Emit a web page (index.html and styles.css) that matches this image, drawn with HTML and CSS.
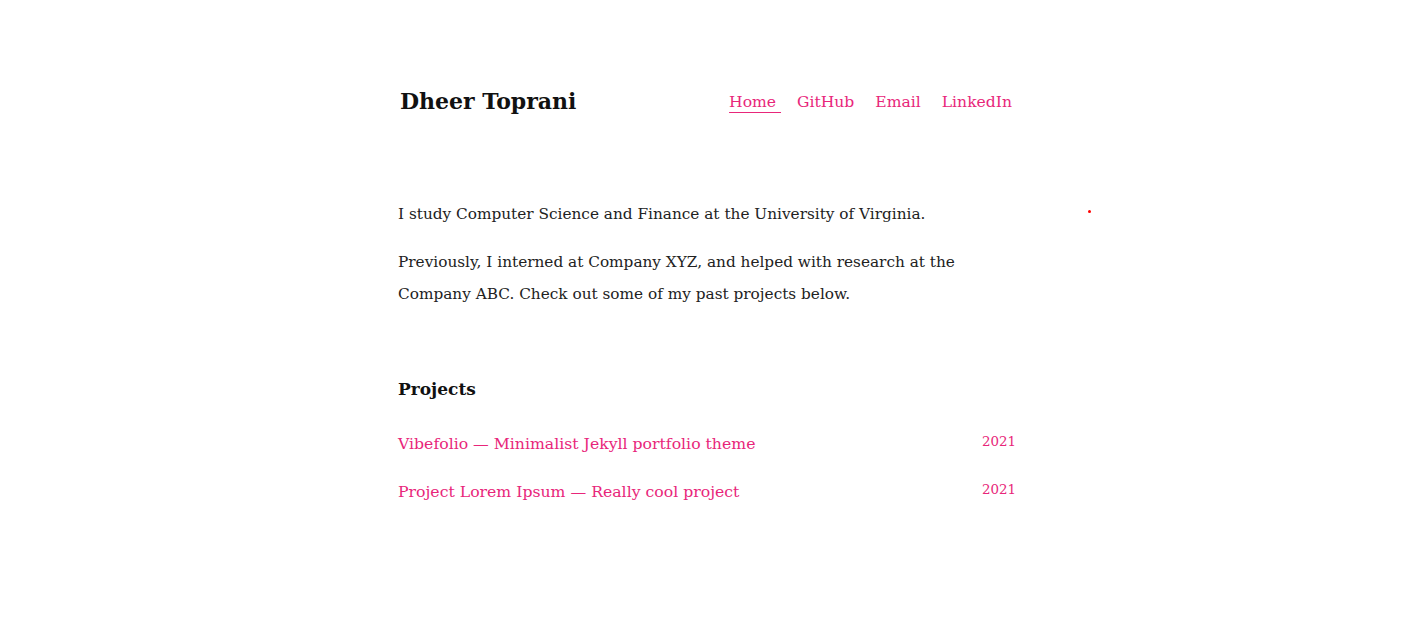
FILE: index.html
```html
<!DOCTYPE html>
<html lang="en">
<head>
<meta charset="utf-8">
<title>Dheer Toprani</title>
<link rel="stylesheet" href="styles.css">
</head>
<body>
<div class="page">
  <header class="header">
    <a class="site-title" href="#">Dheer Toprani</a>
    <nav class="nav">
      <a class="nav-link active" href="#">Home </a>
      <a class="nav-link" href="#">GitHub</a>
      <a class="nav-link" href="#">Email</a>
      <a class="nav-link" href="#">LinkedIn</a>
    </nav>
  </header>
  <main class="content">
    <section class="intro">
      <p>I study Computer Science and Finance at the University of Virginia.</p>
      <p>Previously, I interned at Company XYZ, and helped with research at the Company ABC. Check out some of my past projects below.</p>
    </section>
    <section class="projects">
      <h2 class="projects-title">Projects</h2>
      <ul class="project-list">
        <li class="project"><a href="#">Vibefolio — Minimalist Jekyll portfolio theme</a><span class="year">2021</span></li>
        <li class="project"><a href="#">Project Lorem Ipsum — Really cool project</a><span class="year">2021</span></li>
      </ul>
    </section>
  </main>
  <span class="dot"></span>
</div>
</body>
</html>
```

FILE: styles.css
```css
html, body { margin: 0; padding: 0; background: #fff; }
body {
  font-family: "DejaVu Serif", "Liberation Serif", serif;
  color: #222;
  font-size: 15.3px;
}
.page {
  position: relative;
  width: 616px;
  margin: 0 auto;
  padding-top: 87px;
}
.header {
  display: flex;
  justify-content: space-between;
  align-items: center;
  padding: 0 2px 0 2px;
}
.site-title {
  font-size: 22px;
  font-weight: bold;
  color: #111;
  text-decoration: none;
  line-height: 28px;
}
.nav { display: block; font-size: 15.6px; line-height: 24px; padding-top: 1px; }
.nav-link {
  color: #e8267a;
  text-decoration: none;
  margin-left: 16px;
}
.nav-link:first-child { margin-left: 0; }
.nav-link.active { text-decoration: underline; text-underline-offset: 5px; text-decoration-thickness: 1px; }
.content { padding-top: 83px; }
.intro p { margin: 0 0 16px; line-height: 32px; max-width: 575px; }
.projects { margin-top: 67px; }
.projects-title { font-size: 17px; line-height: 24px; margin: 0 0 31px; color: #111; }
.project-list { list-style: none; margin: 0 -2px 0 0; padding: 0; }
.project {
  display: flex;
  justify-content: space-between;
  align-items: flex-start;
  height: 48px;
}
.project a { color: #e8267a; text-decoration: none; font-size: 15.7px; line-height: 24px; }
.year { color: #e8267a; font-size: 13.4px; line-height: 20px; }
.dot {
  position: absolute;
  left: 690px;
  top: 210px;
  width: 3px;
  height: 3px;
  background: #f00;
  border-radius: 50%;
}
```
